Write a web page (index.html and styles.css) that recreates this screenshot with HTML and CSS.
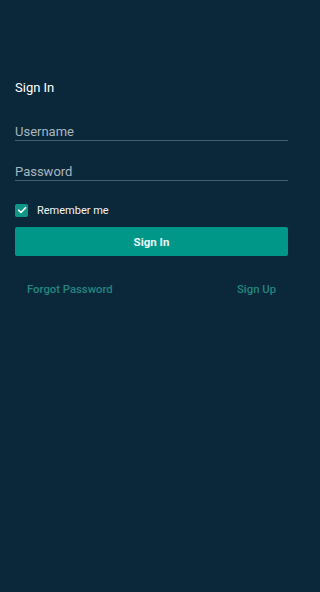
FILE: index.html
```html
<!DOCTYPE html>
<html>
<head>
<meta charset="utf-8">
<link rel="stylesheet" href="styles.css">
</head>
<body>
<main class="screen">
  <h1 class="title">Sign In</h1>
  <div class="field"><span class="placeholder">Username</span></div>
  <div class="field field-2"><span class="placeholder">Password</span></div>
  <label class="remember">
    <span class="box"><svg viewBox="0 0 12 12" width="12" height="12"><path d="M2.6 6.2 L5 8.5 L9.6 3.6" fill="none" stroke="#fff" stroke-width="1.6" stroke-linecap="round" stroke-linejoin="round"/></svg></span>
    <span class="remember-text">Remember me</span>
  </label>
  <button class="btn">Sign In</button>
  <div class="links">
    <a class="link">Forgot Password</a>
    <a class="link">Sign Up</a>
  </div>
</main>
</body>
</html>
```

FILE: styles.css
```css
html, body {
  margin: 0;
  padding: 0;
  background: #0b283b;
  height: 100%;
}
.screen {
  font-family: Roboto, "Liberation Sans", sans-serif;
  padding: 80px 11px 0 15px;
  box-sizing: border-box;
  width: 299px;
  height: 592px;
  background: #0b283b;
}
.title {
  margin: 0;
  font-size: 13px;
  font-weight: 400;
  color: #ffffff;
  line-height: 16px;
}
.field {
  margin-top: 28px;
  height: 16px;
  border-bottom: 1px solid #3f6072;
  padding-bottom: 0;
  display: flex;
  align-items: flex-end;
}
.field-2 {
  margin-top: 23px;
}
.placeholder {
  font-size: 13px;
  color: #a9b6be;
  line-height: 16px;
}
.remember {
  display: flex;
  align-items: center;
  margin-top: 22px;
  height: 14px;
}
.box {
  width: 13px;
  height: 13px;
  background: #0f9688;
  border-radius: 2px;
  display: flex;
  align-items: center;
  justify-content: center;
}
.remember-text {
  margin-left: 9px;
  font-size: 11px;
  color: #f2f4f5;
}
.btn {
  display: block;
  width: 100%;
  margin-top: 10px;
  height: 29px;
  background: #009688;
  border: none;
  border-radius: 2px;
  color: #eaf6f4;
  font-family: Roboto, "Liberation Sans", sans-serif;
  font-size: 11.5px;
  font-weight: 700;
  padding: 0;
}
.links {
  display: flex;
  justify-content: space-between;
  padding: 0 12px 0 12px;
  margin-top: 27px;
}
.link {
  font-size: 11.3px;
  font-weight: 500;
  color: #23857d;
  line-height: 14px;
}
```
